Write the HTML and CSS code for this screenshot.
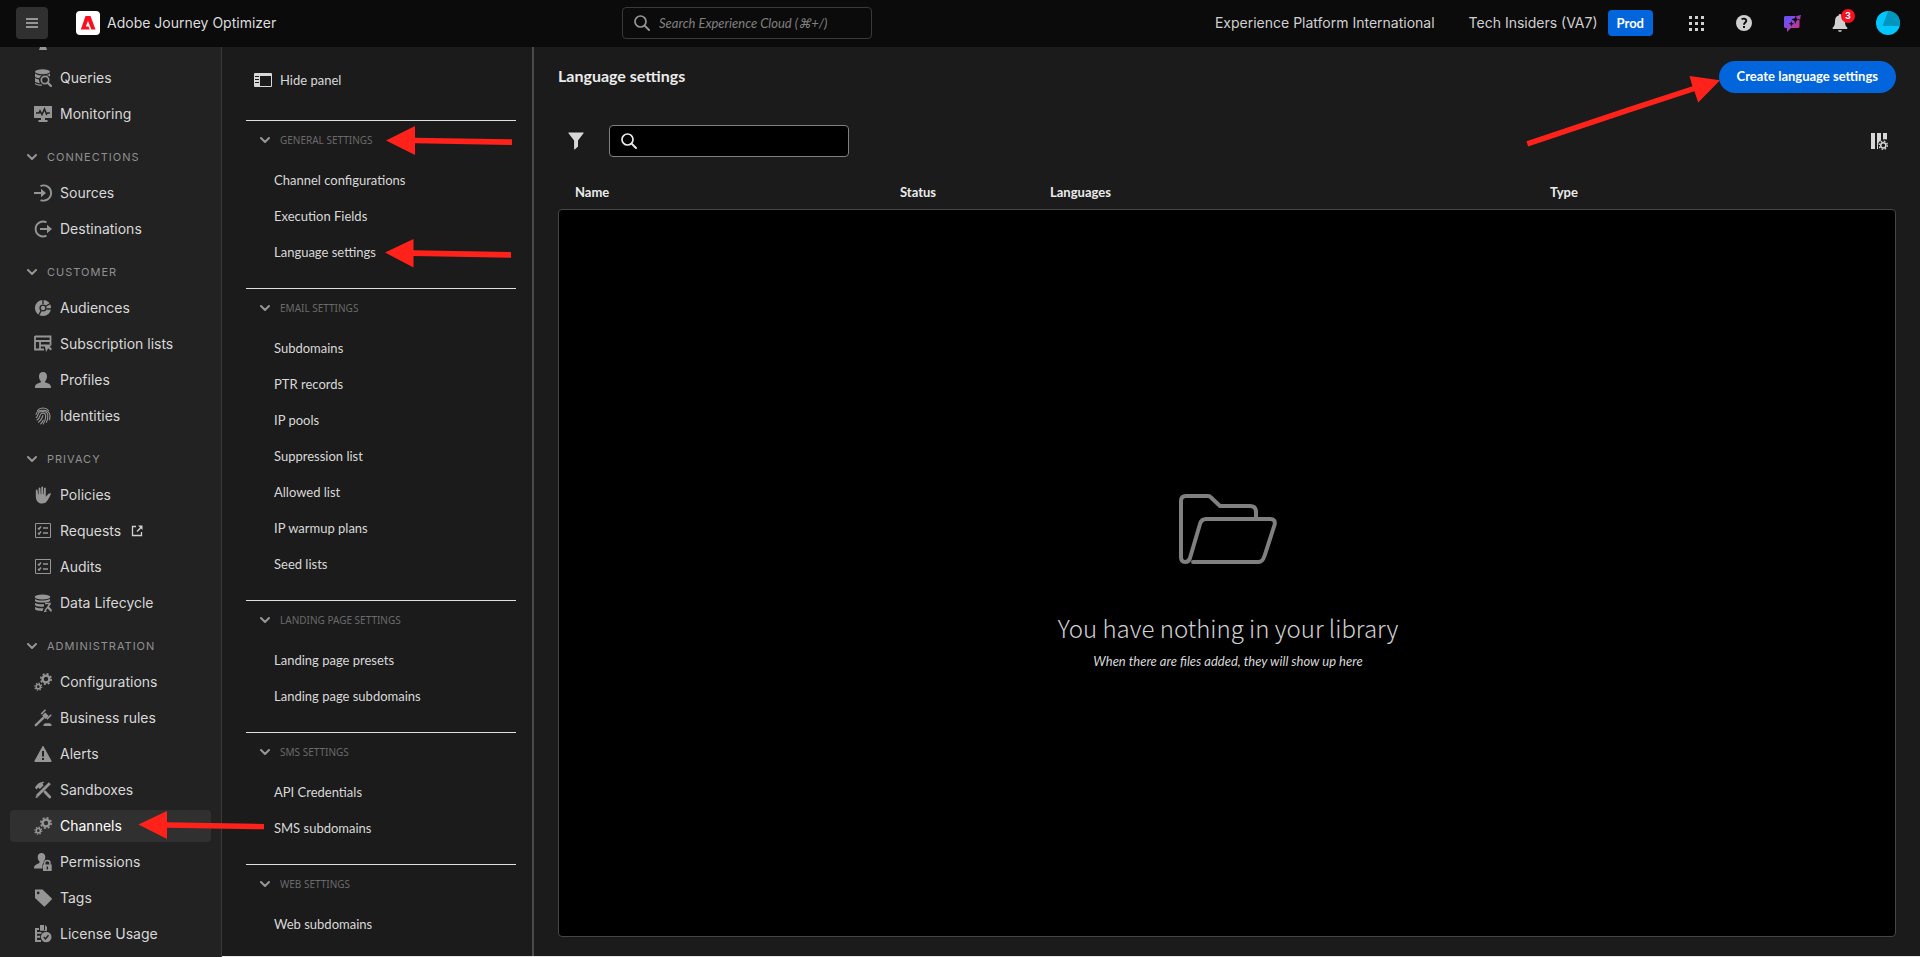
FILE: index.html
```html
<!DOCTYPE html>
<html lang="en">
<head>
<meta charset="utf-8">
<title>Adobe Journey Optimizer</title>
<link rel="stylesheet" href="styles.css">
</head>
<body>
<svg class="sprite" aria-hidden="true">
  <defs>
    <linearGradient id="ai-fill" x1="0" y1="0" x2="1" y2="1"><stop offset="0" stop-color="#5a55f5"/><stop offset=".35" stop-color="#7d4ce8"/><stop offset="1" stop-color="#f0264d"/></linearGradient>
    <symbol id="chevron" viewBox="0 0 10 6"><path d="M1 1l4 4 4-4" fill="none" stroke="currentColor" stroke-width="2" stroke-linecap="round" stroke-linejoin="round"/></symbol>
    <symbol id="search" viewBox="0 0 18 18"><circle cx="7.500" cy="7.500" r="5.500" fill="none" stroke="currentColor" stroke-width="1.700"/><path d="M11.600 11.600l4.400 4.400" stroke="currentColor" stroke-width="2" stroke-linecap="round"/></symbol>
    <symbol id="disk" viewBox="0 0 18 18"><path d="M2 2h14v11H2z"/><path d="M6 14h6l1 3H5z"/></symbol>
    <symbol id="queries" viewBox="0 0 18 18"><ellipse cx="8.500" cy="2.700" rx="7.500" ry="2.500"/><path d="M1 4.600C2.500 6 5 6.400 8 6.400 6.500 7.200 5.700 8.100 5.300 9.200 3.400 9 1.700 8.500 1 7.800zM1 9c1.200.8 2.500 1.200 4 1.400 0 1.300.3 2.700 1.200 3.800C4 14 1.700 13.600 1 12.500zM16 4.600v3C14.900 6.600 13.600 6.200 12 6c1.600-.2 3.200-.7 4-1.400zM1 14c1.500 1.200 4 1.500 7 1.500v1.300c-3.500 0-6.500-.6-7-1.800z"/><circle cx="11" cy="11" r="3.700" fill="none" stroke="currentColor" stroke-width="1.700"/><path d="M13.600 13.600l3.400 3.400" stroke="currentColor" stroke-width="2.200" stroke-linecap="round"/></symbol>
    <symbol id="monitoring" viewBox="0 0 18 18"><path d="M0 1h18v12h-7v2h2.500v2h-9v-2H7v-2H0z"/><path d="M2 8h3l1-2 2 3.500L10.500 4l2 5 1-1H16" fill="none" stroke="#222" stroke-width="1.600"/></symbol>
    <symbol id="sources" viewBox="0 0 18 18"><path d="M6.500 2A7.600 7.600 0 1 1 6.500 16" fill="none" stroke="currentColor" stroke-width="1.900"/><path d="M0 8h7V4.800L12 9l-5 4.200V10H0z"/></symbol>
    <symbol id="destinations" viewBox="0 0 18 18"><path d="M12.500 2.300A7.500 7.500 0 1 0 12.500 15.700" fill="none" stroke="currentColor" stroke-width="1.900"/><path d="M6 8h7V4.800L18 9l-5 4.200V10H6z"/></symbol>
    <symbol id="audiences" viewBox="0 0 18 18"><circle cx="9" cy="9" r="5.600" fill="none" stroke="currentColor" stroke-width="5"/><path d="M9 5V0M12 7l6-3.500M12.500 10H18M7 12l-3 5.500" stroke="#222" stroke-width="1.300"/><circle cx="9" cy="9" r="3.600" fill="#222"/><circle cx="9" cy="9" r="2.200"/></symbol>
    <symbol id="subscription" viewBox="0 0 18 18"><path d="M1 1.500h15.500v8M1 1v13.500h9M1 6h15.500M6 6v8M6 10.500h5" fill="none" stroke="currentColor" stroke-width="1.800"/><path d="M10.500 9.500H18l-2.200 2.200L18 14l-1.500 1.500-2.200-2.200L12 17z"/></symbol>
    <symbol id="profile" viewBox="0 0 18 18"><path d="M9 1c2.600 0 4 1.800 4 4.400 0 1.800-.7 3.500-1.700 4.500-.4.500-.3 1.400.3 1.700 2.400.9 5.400 1.500 5.400 4.700v.7H1v-.7c0-3.200 3-3.800 5.400-4.700.6-.3.700-1.200.3-1.700C5.700 8.900 5 7.200 5 5.400 5 2.800 6.400 1 9 1z"/></symbol>
    <symbol id="identity" viewBox="0 0 18 18"><g fill="none" stroke="currentColor" stroke-width="1.100" stroke-linecap="round"><path d="M3.500 3.500C6 .2 12 .2 14.500 3.500M2 7.500C3 2.200 15 1.200 16 8.500c0 1.800-.2 3-.6 4.300M2.200 10.500c1.600-.8 1.400-2 1.800-3.200C5 3.400 13 3.400 13.800 8c.2 2.600-.4 5.200-1.400 7.300M3 13c3.500-1.500 2-4.500 4-6.200 1.700-1.400 4.600-.6 4.700 2 .1 3-1 6-2.500 8.200M4.500 15.200c3.300-2 3.700-4.200 4.400-6.700M6.700 16.800c1-.9 1.900-2 2.600-3.500"/></g></symbol>
    <symbol id="policy" viewBox="0 0 18 18"><path d="M1.800 10V4.400c0-1.200 1.700-1.200 1.800 0l.5 3.900.5.100V2.300c0-1.200 1.700-1.200 1.800 0l.4 5.900h.5V1.300c0-1.200 1.800-1.200 1.800 0v6.900h.5l.4-5.900c.1-1.200 1.800-1.200 1.800 0v8.500l2.800-3c.9-.9 2.700-.7 2.300.1-1.600 3.500-3 5.700-4.400 7.900C11.500 17 10.400 17.500 8 17.500c-3.800 0-6.200-2.600-6.200-7.500z"/></symbol>
    <symbol id="checklist" viewBox="0 0 18 18"><path d="M1.500 1.500h15v14h-15z" fill="none" stroke="currentColor" stroke-width="1"/><path d="M4 6l1 1 2-2.500M4 11l1 1 2-2.500M9 6h5M9 11h5" fill="none" stroke="currentColor" stroke-width="1.600"/></symbol>
    <symbol id="lifecycle" viewBox="0 0 18 18"><ellipse cx="8.500" cy="3" rx="7.800" ry="2.500"/><path d="M1 5c3 2 10 2 15 0v2c-1 .8-2.500 1.200-5 1.400C7 8.700 2 8.500 1 7zM1 9c2 1.200 5 1.500 9 1.300v2.200C6 13 2 12.500 1 11zM1 13c2 1.300 5 1.500 8.500 1.200l-1 2.700C5 17 1.500 16.500 1 15z"/><path d="M11 9.500h5l-2 3 3.500 4M16.500 9.500L11 16.500M14 14l3.500 3.500M10 17.500h2.500" fill="none" stroke="currentColor" stroke-width="1.300"/></symbol>
    <symbol id="gears" viewBox="0 0 18 18"><g fill="none" stroke="currentColor"><circle cx="12" cy="6" r="3.400" stroke-width="2.400"/><circle cx="12" cy="6" r="5.200" stroke-width="1.700" stroke-dasharray="2.040 2.040"/><circle cx="4.300" cy="13.700" r="2.100" stroke-width="1.500"/><circle cx="4.300" cy="13.700" r="3.500" stroke-width="1.200" stroke-dasharray="1.370 1.370"/></g></symbol>
    <symbol id="gavel" viewBox="0 0 18 18"><path d="M1.800 16.200l7.500-7.400" stroke="currentColor" stroke-width="2.400" stroke-linecap="round"/><path d="M11.200 3.500l3.500 3.500-3 3-3.500-3.500z"/><path d="M11.500.800l-4.300 4.300M17.200 5.800l-4.300 4.300" stroke="currentColor" stroke-width="1.500"/><path d="M9.500 17v-1.500l1.500-1.300h5l1.500 1.300V17z"/></symbol>
    <symbol id="alert" viewBox="0 0 18 18"><path d="M8.500 1.300c.3-.5.800-.5 1 0l8 14.500c.3.600 0 1.200-.6 1.200H1.100c-.6 0-.9-.6-.6-1.200z"/><path d="M9 6v5.500M9 13v2" stroke="#222" stroke-width="2"/></symbol>
    <symbol id="tools" viewBox="0 0 18 18"><path d="M3.200 14.800L15.800 2.200" stroke="currentColor" stroke-width="2.800"/><path d="M1.500 17l.8-3 2.200 2.200z"/><path d="M1 6.500C3 3 5.500.7 10.500.7L8.600 2.500l.9 2L5.800 8 4.300 6.600 2.500 8.400z"/><path d="M11 11l4.800 5" stroke="currentColor" stroke-width="2.800" stroke-linecap="round"/></symbol>
    <symbol id="permissions" viewBox="0 0 18 18"><path d="M7.500 0C10 0 11.300 1.700 11.300 4.100c0 1.700-.7 3.300-1.600 4.200-.3.500-.3 1.200.2 1.400l-1.400 1.500v4.300H0c0-3.300 2.700-4.400 5-5.200.6-.3.700-1.400.3-2C4.300 7.400 3.700 5.900 3.700 4.100 3.700 1.700 5 0 7.500 0z"/><path d="M9 11.500h8.700V18H9z"/><path d="M10.700 12V9.700c0-3 5.300-3 5.300 0V12" fill="none" stroke="currentColor" stroke-width="1.500"/><path d="M13.350 13.500v3" stroke="#222" stroke-width="1.400"/></symbol>
    <symbol id="tag" viewBox="0 0 18 18"><path fill-rule="evenodd" d="M1 .5h7.500l9.200 8.700c.4.400.4.900 0 1.300L11 17.200c-.4.400-.9.400-1.300 0L1 9zM4.200 2.600a1.300 1.300 0 1 0 0 2.600 1.300 1.300 0 0 0 0-2.600z"/></symbol>
    <symbol id="license" viewBox="0 0 18 18"><path d="M6 0h4v5h3V0v5l-.3.700H6z"/><path d="M11 0l2 2v3.500h-2zM1 3h4v2H3v2h4.500v1.800H3v2h3.200v2H3V15h4v2H1z"/><circle cx="12.200" cy="12" r="5.300"/><path d="M9.800 12l1.700 1.900 3-3.700" fill="none" stroke="#222" stroke-width="1.500"/></symbol>
    <symbol id="external" viewBox="0 0 12 12"><path d="M5 1.500H1.500v9h9V7" fill="none" stroke="currentColor" stroke-width="1.300"/><path d="M7 .5h4.500V5L10 3.500 6.500 7l-1-1L9 2.500z"/></symbol>
    <symbol id="panel" viewBox="0 0 18 14"><path fill-rule="evenodd" d="M1 0h16a1 1 0 0 1 1 1v12a1 1 0 0 1-1 1H1a1 1 0 0 1-1-1V1a1 1 0 0 1 1-1zM6 3v10h11V3zM1 3v1h4V3zM1 6v1h4V6zM1 9v1h4V9z"/></symbol>
  </defs>
</svg>

<header class="topbar">
  <div class="brand">
    <button class="menu-btn" aria-label="Menu"><svg width="12" height="10" viewBox="0 0 12 10"><path d="M0 1h12M0 5h12M0 9h12" stroke="currentColor" stroke-width="2"/></svg></button>
    <svg class="logo" width="24" height="24" viewBox="0 0 24 24"><rect width="24" height="24" rx="4" fill="#fff"/><path d="M9.500 5h5l5 13.500h-4.200L12 10l-2.200 5.500h2.700l1.100 3H4.800z" fill="#fa0f1e"/></svg>
    <span class="app-name">Adobe Journey Optimizer</span>
  </div>
  <label class="field global-search"><svg class="icon"><use href="#search"/></svg><input type="text" placeholder="Search Experience Cloud (⌘+/)" aria-label="Search Experience Cloud"></label>
  <div class="account">
    <span class="org">Experience Platform International</span>
    <span class="sandbox">Tech Insiders (VA7)</span>
    <span class="prod">Prod</span>
    <button class="tool" aria-label="Apps"><svg width="15" height="15" viewBox="0 0 15 15"><path d="M0 0h3v3H0zM6 0h3v3H6zM12 0h3v3h-3zM0 6h3v3H0zM6 6h3v3H6zM12 6h3v3h-3zM0 12h3v3H0zM6 12h3v3H6zM12 12h3v3h-3z"/></svg></button>
    <button class="tool" aria-label="Help"><svg width="16" height="16" viewBox="0 0 16 16"><circle cx="8" cy="8" r="8"/><path d="M5.600 4.400C7 3.200 10.300 3.300 10.300 5.700 10.300 7.500 8 7.600 8 9.700M8 11v2" fill="none" stroke="#0b0b0b" stroke-width="1.900"/></svg></button>
    <button class="tool" aria-label="AI Assistant"><svg width="18" height="17" viewBox="0 0 18 17"><path d="M2.500 1H14l4-1-1.500 5v6.500c0 .9-.6 1.500-1.500 1.500H8l-4 4v-4H2.500C1.600 13 1 12.400 1 11.500v-9C1 1.600 1.600 1 2.500 1z" fill="url(#ai-fill)"/><path d="M13 0l.6 3.400L17 4.500l-3.400 1L12.300 9l-1-3.300L8.500 4.500 12 3zM8.500 6l.6 2 2 .8-2 .7-.6 2-.8-2-2-.7 2-.8z" fill="#0b0b0b"/><path d="M17.500 0l-.8 2.300L18 4l-2.200-.7L14 5l.8-2.500L13.500 1l2.200.6z" fill="#b33a9c"/></svg></button>
    <button class="tool bell" aria-label="Notifications"><svg width="16" height="18" viewBox="0 0 16 18"><path d="M8 0c.8 0 1.300.6 1.300 1.400C12 2 13 4.200 13 7c0 4 .8 5.200 2.200 6.500.5.500.3 1.500-.5 1.500H1.300c-.8 0-1-1-.5-1.500C2.200 12.200 3 11 3 7c0-2.800 1-5 3.700-5.600C6.700.6 7.200 0 8 0zM6 16.200h4c-.2 2-3.800 2-4 0z"/></svg><span class="badge">3</span></button>
    <button class="tool" aria-label="Account"><svg width="24" height="24" viewBox="0 0 24 24"><circle cx="12" cy="12" r="12" fill="#00c8ff"/><path d="M12 0A12 12 0 0 1 23.500 15H6.500z" fill="#0096bf"/></svg></button>
  </div>
</header>

<div class="shell">
  <nav class="sidebar" aria-label="Main">
    <a class="nav-item" href="#" aria-label="Data"><svg class="icon"><use href="#disk"/></svg></a>
    <a class="nav-item" href="#"><svg class="icon"><use href="#queries"/></svg>Queries</a>
    <a class="nav-item" href="#"><svg class="icon"><use href="#monitoring"/></svg>Monitoring</a>
    <button class="nav-head"><svg class="chev"><use href="#chevron"/></svg>CONNECTIONS</button>
    <a class="nav-item" href="#"><svg class="icon"><use href="#sources"/></svg>Sources</a>
    <a class="nav-item" href="#"><svg class="icon"><use href="#destinations"/></svg>Destinations</a>
    <button class="nav-head"><svg class="chev"><use href="#chevron"/></svg>CUSTOMER</button>
    <a class="nav-item" href="#"><svg class="icon"><use href="#audiences"/></svg>Audiences</a>
    <a class="nav-item" href="#"><svg class="icon"><use href="#subscription"/></svg>Subscription lists</a>
    <a class="nav-item" href="#"><svg class="icon"><use href="#profile"/></svg>Profiles</a>
    <a class="nav-item" href="#"><svg class="icon"><use href="#identity"/></svg>Identities</a>
    <button class="nav-head"><svg class="chev"><use href="#chevron"/></svg>PRIVACY</button>
    <a class="nav-item" href="#"><svg class="icon"><use href="#policy"/></svg>Policies</a>
    <a class="nav-item" href="#"><svg class="icon"><use href="#checklist"/></svg>Requests<svg class="ext"><use href="#external"/></svg></a>
    <a class="nav-item" href="#"><svg class="icon"><use href="#checklist"/></svg>Audits</a>
    <a class="nav-item" href="#"><svg class="icon"><use href="#lifecycle"/></svg>Data Lifecycle</a>
    <button class="nav-head"><svg class="chev"><use href="#chevron"/></svg>ADMINISTRATION</button>
    <a class="nav-item" href="#"><svg class="icon"><use href="#gears"/></svg>Configurations</a>
    <a class="nav-item" href="#"><svg class="icon"><use href="#gavel"/></svg>Business rules</a>
    <a class="nav-item" href="#"><svg class="icon"><use href="#alert"/></svg>Alerts</a>
    <a class="nav-item" href="#"><svg class="icon"><use href="#tools"/></svg>Sandboxes</a>
    <a class="nav-item active" href="#"><svg class="icon"><use href="#gears"/></svg>Channels</a>
    <a class="nav-item" href="#"><svg class="icon"><use href="#permissions"/></svg>Permissions</a>
    <a class="nav-item" href="#"><svg class="icon"><use href="#tag"/></svg>Tags</a>
    <a class="nav-item" href="#"><svg class="icon"><use href="#license"/></svg>License Usage</a>
  </nav>

  <div class="content">
    <aside class="panel">
      <button class="hide-panel"><svg width="18" height="14"><use href="#panel"/></svg>Hide panel</button>
      <section class="group">
        <button class="group-head"><svg class="chev"><use href="#chevron"/></svg>GENERAL SETTINGS</button>
        <a href="#">Channel configurations</a>
        <a href="#">Execution Fields</a>
        <a href="#">Language settings</a>
      </section>
      <section class="group">
        <button class="group-head"><svg class="chev"><use href="#chevron"/></svg>EMAIL SETTINGS</button>
        <a href="#">Subdomains</a>
        <a href="#">PTR records</a>
        <a href="#">IP pools</a>
        <a href="#">Suppression list</a>
        <a href="#">Allowed list</a>
        <a href="#">IP warmup plans</a>
        <a href="#">Seed lists</a>
      </section>
      <section class="group">
        <button class="group-head"><svg class="chev"><use href="#chevron"/></svg>LANDING PAGE SETTINGS</button>
        <a href="#">Landing page presets</a>
        <a href="#">Landing page subdomains</a>
      </section>
      <section class="group">
        <button class="group-head"><svg class="chev"><use href="#chevron"/></svg>SMS SETTINGS</button>
        <a href="#">API Credentials</a>
        <a href="#">SMS subdomains</a>
      </section>
      <section class="group">
        <button class="group-head"><svg class="chev"><use href="#chevron"/></svg>WEB SETTINGS</button>
        <a href="#">Web subdomains</a>
      </section>
    </aside>

    <main class="main">
      <div class="title-row">
        <h1>Language settings</h1>
        <button class="create">Create language settings</button>
      </div>
      <div class="filter-row">
        <button class="plain" aria-label="Filter"><svg width="16" height="18" viewBox="0 0 16 18"><path d="M.8.500h14.400c.5 0 .6.500.3.800L10 8.500v6l-3.200 3c-.3.200-.7 0-.7-.4V8.500L.5 1.300C.2 1 .3.500.8.500z"/></svg></button>
        <label class="field list-search"><svg class="icon"><use href="#search"/></svg><input type="text" aria-label="Search language settings"></label>
        <button class="plain columns" aria-label="Customize columns"><svg width="18" height="18" viewBox="0 0 18 18"><path d="M1 1h4v16H1zM7 1h4v7.500C8.500 9.500 7.500 12 8 14.500V17H7zM13 1h4v6.500c-1.500-.5-2.500-.5-4 0z"/><g fill="none" stroke="currentColor"><circle cx="13.300" cy="13.300" r="2.600" stroke-width="1.500"/><circle cx="13.300" cy="13.300" r="4.100" stroke-width="1.300" stroke-dasharray="1.610 1.610"/></g></svg></button>
      </div>
      <table class="columns-head">
        <thead><tr><th class="c-name">Name</th><th class="c-status">Status</th><th class="c-lang">Languages</th><th>Type</th></tr></thead>
      </table>
      <div class="empty">
        <svg width="98" height="70" viewBox="0 0 98 70"><path d="M77 24v-6q0-6-6-6H41L32 3.500Q31 2 29 2H7Q2 2 2 7v56q0 5 4 5t5-4l10-34q1.500-5 6-5h64q6 0 4.500 6l-10 31q-2 6-6 6H14" fill="none" stroke="#808080" stroke-width="4" stroke-linecap="round" stroke-linejoin="round"/></svg>
        <h2>You have nothing in your library</h2>
        <p>When there are files added, they will show up here</p>
      </div>
    </main>
  </div>
</div>

<svg class="arrows" aria-hidden="true">
  <path d="M386 140.500L415 126v11.700L512 139.300v5.700L415 143.300V155z"/>
  <path d="M385 252.500L413.500 239v11.300L511 252v5.700L413.500 256v11.500z"/>
  <path d="M138.500 824.500L167 811v11.300L264 824v5.300L167 827.700V839z"/>
  <path d="M1720 80.300L1689.500 76l2.900 10.300-66 21.500-99.900 33.500 1.600 5.200 100-33.500 66.300-21.700 3.800 11.200z"/>
</svg>
</body>
</html>
```
FILE: styles.css
```css
* { box-sizing: border-box; }

body {
  margin: 0;
  height: 100vh;
  display: flex;
  flex-direction: column;
  overflow: hidden;
  background: #1b1b1b;
  color: #d8d8d8;
  font: 13px/20px Lato, "Noto Sans", sans-serif;
}

a { color: inherit; text-decoration: none; }
button { font: inherit; color: inherit; background: none; border: 0; padding: 0; text-align: left; }
svg { fill: currentColor; flex: none; }
.sprite { position: absolute; width: 0; height: 0; }
.icon { width: 18px; height: 18px; }
.chev { width: 10px; height: 6px; color: #959595; }

/* Top bar */
.topbar {
  flex: none;
  height: 47px;
  padding-bottom: 1px;
  display: grid;
  grid-template-columns: 622px 250px 1fr;
  align-items: center;
  background: #0b0b0b;
  font-family: Inter, "Noto Sans", sans-serif;
  font-size: 14px;
}
.brand { display: flex; align-items: center; padding-left: 16px; }
.menu-btn {
  width: 32px;
  height: 32px;
  display: grid;
  place-items: center;
  border-radius: 4px;
  background: #303030;
  color: #959595;
}
.logo { margin: 0 7px 0 28px; }
.app-name { color: #ddd; }

.field {
  display: flex;
  align-items: center;
  gap: 8px;
  height: 32px;
  padding: 0 10px;
  border: 1px solid #808080;
  border-radius: 4px;
}
.field input {
  flex: 1;
  min-width: 0;
  padding: 0;
  border: 0;
  outline: 0;
  background: none;
  color: #ddd;
  font: 14px/20px Lato, "Noto Sans", sans-serif;
}
.global-search { border-color: #393939; color: #959595; }
.global-search input { font-size: 13px; }
.global-search input::placeholder { color: #808080; font-style: italic; opacity: 1; }

.account { display: flex; align-items: center; justify-content: flex-end; padding-right: 8px; color: #d0d0d0; }
.org { margin-right: 34px; }
.sandbox { margin-right: 10px; }
.prod {
  margin-right: 19px;
  padding: 3px 9px;
  border-radius: 4px;
  background: #0265dc;
  color: #fff;
  font: 700 13px/20px Lato, "Noto Sans", sans-serif;
}
.tool { width: 48px; height: 32px; display: grid; place-items: center; position: relative; color: #d0d0d0; }
.badge {
  position: absolute;
  top: 2px;
  right: 9px;
  width: 14px;
  height: 14px;
  border-radius: 7px;
  background: #fa0f1e;
  color: #fff;
  text-align: center;
  font: 700 9px/14px Inter, sans-serif;
}

/* Shell */
.shell { flex: 1; min-height: 0; display: flex; }
.sidebar {
  flex: none;
  width: 222px;
  display: flex;
  flex-direction: column;
  justify-content: flex-end;
  overflow: hidden;
  padding: 0 10px 7px;
  border-right: 1px solid #3a3a3a;
  background: #222;
  font: 14px/20px Inter, "Noto Sans", sans-serif;
}
.nav-item {
  flex: none;
  display: flex;
  align-items: center;
  gap: 8px;
  height: 32px;
  margin-bottom: 4px;
  padding-left: 24px;
  border-radius: 4px;
}
.nav-item:last-child { margin-bottom: 0; }
.nav-item .icon { color: #959595; }
.nav-item .ext { width: 12px; height: 12px; margin-left: 2px; color: #d0d0d0; }
.nav-item.active { background: #303030; color: #fff; }
.nav-head {
  flex: none;
  display: flex;
  align-items: center;
  gap: 10px;
  height: 43px;
  padding: 2px 0 0 17px;
  color: #909090;
  font-size: 11px;
  letter-spacing: 1px;
}

.content { flex: 1; min-width: 0; display: flex; border-bottom: 1px solid #e8e8e8; }
.panel {
  flex: none;
  width: 312px;
  overflow: hidden;
  padding: 0 16px 0 24px;
  border-right: 2px solid #4a4a4a;
}
.hide-panel { display: flex; align-items: center; gap: 8px; margin: 23px 0 30px 8px; }
.group {
  display: flex;
  flex-direction: column;
  padding-bottom: 18px;
  border-top: 1px solid #e0e0e0;
}
.group a { padding: 8px 0 8px 28px; }
.group-head {
  display: flex;
  align-items: center;
  gap: 10px;
  height: 41px;
  padding: 0 0 3px 14px;
  color: #6a6a6a;
  font-family: "Noto Sans", sans-serif;
  font-size: 10px;
}

/* Main */
.main { flex: 1; min-width: 0; display: flex; flex-direction: column; padding: 14px 24px 19px; }
.title-row { display: flex; align-items: center; justify-content: space-between; }
h1 { margin: 0; padding-bottom: 2px; color: #ebebeb; font-size: 16px; line-height: 20px; font-weight: 700; }
.create {
  height: 32px;
  padding: 0 18px 2px;
  border-radius: 16px;
  background: #0265dc;
  color: #fff;
  font-weight: 700;
}
.filter-row { display: flex; align-items: center; margin: 32px 8px 24px 10px; }
.plain { display: grid; place-items: center; }
.list-search { width: 240px; margin-left: 25px; background: #000; color: #ebebeb; }
.columns { margin-left: auto; }
.columns-head { width: 100%; table-layout: fixed; border-collapse: collapse; }
th { padding: 0 0 6px 17px; height: 28px; text-align: left; color: #ebebeb; font-weight: 700; }
.c-name { width: 325px; }
.c-status { width: 150px; }
.c-lang { width: 500px; }
.empty {
  flex: 1;
  display: flex;
  flex-direction: column;
  align-items: center;
  justify-content: center;
  padding: 18px 0 0 2px;
  border: 1px solid #464646;
  border-radius: 4px;
  background: #000;
}
h2 { margin: 46px 0 5px; color: #d0d0d0; font: 300 24px/36px "Noto Sans CJK JP", Lato, sans-serif; }
.empty p { margin: 0; font-style: italic; }

.arrows { position: absolute; inset: 0; width: 100%; height: 100%; fill: #ff221a; pointer-events: none; }
```
